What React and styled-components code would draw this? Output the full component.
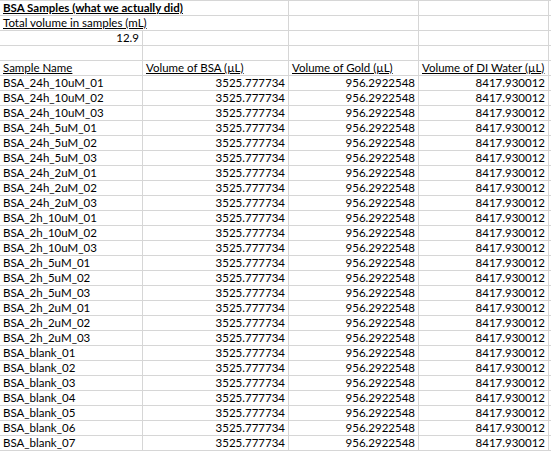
import React from "react";
import styled, { createGlobalStyle } from "styled-components";

const GlobalStyle = createGlobalStyle`
  html, body {
    margin: 0;
    padding: 0;
    background: #fff;
  }
`;

const Sheet = styled.div`
  display: grid;
  grid-template-columns: 143px 146px 130px 130px 1fr;
  grid-auto-rows: 15px;
  width: 551px;
  border-top: 1px solid #d6d6d6;
  font-family: Lato, "Open Sans", sans-serif;
  font-size: 11.5px;
  color: #000;
  overflow: hidden;
`;

const Cell = styled.div`
  box-sizing: border-box;
  grid-column: span ${(p) => p.span || 1};
  border-right: 1px solid #d6d6d6;
  border-bottom: 1px solid #d6d6d6;
  padding: 0 3px;
  line-height: 14px;
  white-space: nowrap;
  overflow: visible;
  text-align: ${(p) => (p.num ? "right" : "left")};
  font-weight: ${(p) => (p.bold ? 700 : 400)};
  text-decoration: ${(p) => (p.under ? "underline" : "none")};
  text-underline-offset: 1px;
`;

const names = [];
["24h", "2h"].forEach((t) =>
  ["10uM", "5uM", "2uM"].forEach((c) =>
    ["01", "02", "03"].forEach((n) => names.push(`BSA_${t}_${c}_${n}`))
  )
);
for (let i = 1; i <= 7; i++) names.push(`BSA_blank_0${i}`);

const App = () => (
  <>
    <GlobalStyle />
    <Sheet>
      <Cell span={2} bold under>BSA Samples (what we actually did)</Cell>
      <Cell />
      <Cell />
      <Cell />

      <Cell span={2} under>Total volume in samples (mL)</Cell>
      <Cell />
      <Cell />
      <Cell />

      <Cell num>12.9</Cell>
      <Cell />
      <Cell />
      <Cell />
      <Cell />

      <Cell />
      <Cell />
      <Cell />
      <Cell />
      <Cell />

      <Cell under>Sample Name</Cell>
      <Cell under>Volume of BSA (µL)</Cell>
      <Cell under>Volume of Gold (µL)</Cell>
      <Cell under>Volume of DI Water (µL)</Cell>
      <Cell />

      {names.map((n) => (
        <React.Fragment key={n}>
          <Cell>{n}</Cell>
          <Cell num>3525.777734</Cell>
          <Cell num>956.2922548</Cell>
          <Cell num>8417.930012</Cell>
          <Cell />
        </React.Fragment>
      ))}
    </Sheet>
  </>
);

export default App;
